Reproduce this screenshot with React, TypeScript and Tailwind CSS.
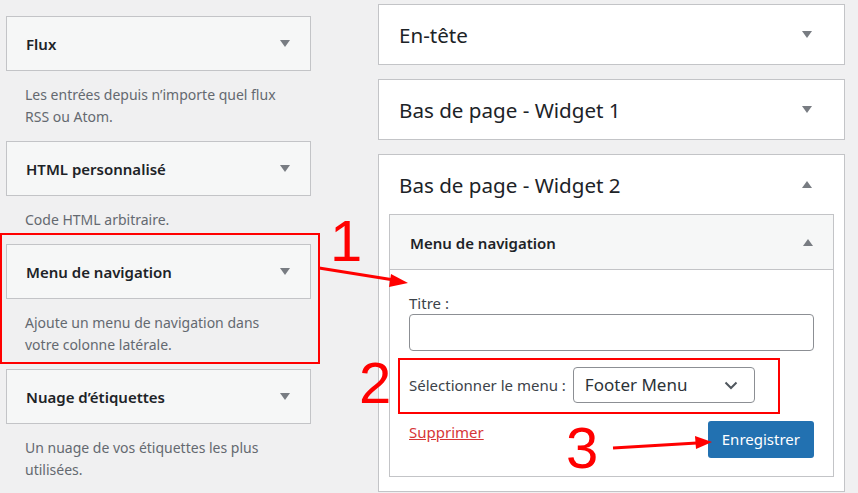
import React from 'react'

const font = { fontFamily: '"Noto Sans", "Open Sans", sans-serif' }
const markFont = { fontFamily: '"Liberation Sans", Arial, sans-serif' }

function Caret({ up = false }: { up?: boolean }) {
  return (
    <svg width="10" height="7" viewBox="0 0 10 7" className="shrink-0">
      {up ? <path d="M0 7 L5 0 L10 7 Z" fill="#787c82" /> : <path d="M0 0 L10 0 L5 7 Z" fill="#787c82" />}
    </svg>
  )
}

function AvailableWidget({ title, desc }: { title: string; desc: string }) {
  return (
    <div>
      <div className="h-[55px] border border-[#c3c4c7] bg-[#f6f7f7] flex items-center justify-between pl-[19px] pr-[20px]">
        <span className="text-[15px] font-semibold text-[#1d2327] pt-[2px]">{title}</span>
        <Caret />
      </div>
      <p className="pt-[13px] pb-[13px] pl-[19px] pr-[30px] text-[14px] leading-[22px] text-[#646970]">{desc}</p>
    </div>
  )
}

function Sidebar({ title, open = false, children }: { title: string; open?: boolean; children?: React.ReactNode }) {
  return (
    <div className="border border-[#c3c4c7] bg-white">
      <div className="h-[59px] flex items-center justify-between pl-[20px] pr-[32px]">
        <span className="text-[20.6px] text-[#1d2327] pt-[2px]">{title}</span>
        <Caret up={open} />
      </div>
      {children}
    </div>
  )
}

export default function App() {
  return (
    <div className="relative h-[493px] w-[858px] overflow-hidden bg-[#f0f0f1] flex" style={font}>
      {/* available widgets */}
      <div className="w-[305px] ml-[6px] pt-[16px] flex flex-col">
        <AvailableWidget title="Flux" desc="Les entrées depuis n’importe quel flux RSS ou Atom." />
        <AvailableWidget title="HTML personnalisé" desc="Code HTML arbitraire." />
        <AvailableWidget title="Menu de navigation" desc="Ajoute un menu de navigation dans votre colonne latérale." />
        <AvailableWidget title="Nuage d’étiquettes" desc="Un nuage de vos étiquettes les plus utilisées." />
      </div>

      {/* sidebars */}
      <div className="ml-[67px] w-[467px] pt-[4px] flex flex-col gap-[14px]">
        <Sidebar title="En-tête" />
        <Sidebar title="Bas de page - Widget 1" />
        <Sidebar title="Bas de page - Widget 2" open>
          <div className="mx-[10px] mb-[14px] border border-[#c3c4c7]">
            <div className="h-[55px] bg-[#f6f7f7] border-b border-[#c3c4c7] flex items-center justify-between pl-[20px] pr-[20px]">
              <span className="text-[15px] font-semibold text-[#1d2327] pt-[2px]">Menu de navigation</span>
              <Caret up />
            </div>
            <div className="px-[19px] pt-[23px] pb-[18px] text-[15px] text-[#3c434a]">
              <div className="leading-[20px]">Titre :</div>
              <div className="mt-[1px] h-[37px] rounded-[4px] border border-[#8c8f94] bg-white" />
              <div className="mt-[16px] flex items-center gap-[7px]">
                <span>Sélectionner le menu :</span>
                <div className="h-[36px] w-[182px] rounded-[4px] border border-[#8c8f94] bg-white flex items-center justify-between pl-[11px] pr-[16px]">
                  <span className="text-[17px] text-[#2c3338]">Footer Menu</span>
                  <svg width="14" height="9" viewBox="0 0 14 9">
                    <path d="M1.5 1.5 L7 7 L12.5 1.5" fill="none" stroke="#50575e" strokeWidth="2" />
                  </svg>
                </div>
              </div>
              <div className="mt-[18px] flex items-start justify-between">
                <a className="text-[15px] text-[#d63638] underline">Supprimer</a>
                <button className="h-[37px] px-[14px] rounded-[3px] bg-[#2271b1] text-white text-[15px]">Enregistrer</button>
              </div>
            </div>
          </div>
        </Sidebar>
      </div>

      {/* annotations */}
      <div className="absolute left-0 top-[233px] w-[320px] h-[131px] border-2 border-[#ff0000]" />
      <div className="absolute left-[398px] top-[358px] w-[382px] h-[56px] border-2 border-[#ff0000]" />
      <span className="absolute left-[330px] top-[206px] text-[58px] leading-[70px] text-[#ff0000]" style={markFont}>1</span>
      <span className="absolute left-[359px] top-[348px] text-[58px] leading-[70px] text-[#ff0000]" style={markFont}>2</span>
      <span className="absolute left-[566px] top-[413px] text-[58px] leading-[70px] text-[#ff0000]" style={markFont}>3</span>
      <svg className="absolute left-0 top-0 pointer-events-none" width="858" height="493">
        <line x1="319" y1="268" x2="394" y2="280" stroke="#ff0000" strokeWidth="3" />
        <path d="M408 283 L391 274 L389 287 Z" fill="#ff0000" />
        <line x1="613" y1="448" x2="697" y2="443" stroke="#ff0000" strokeWidth="3" />
        <path d="M712 442 L695 436 L696 449 Z" fill="#ff0000" />
      </svg>
    </div>
  )
}
